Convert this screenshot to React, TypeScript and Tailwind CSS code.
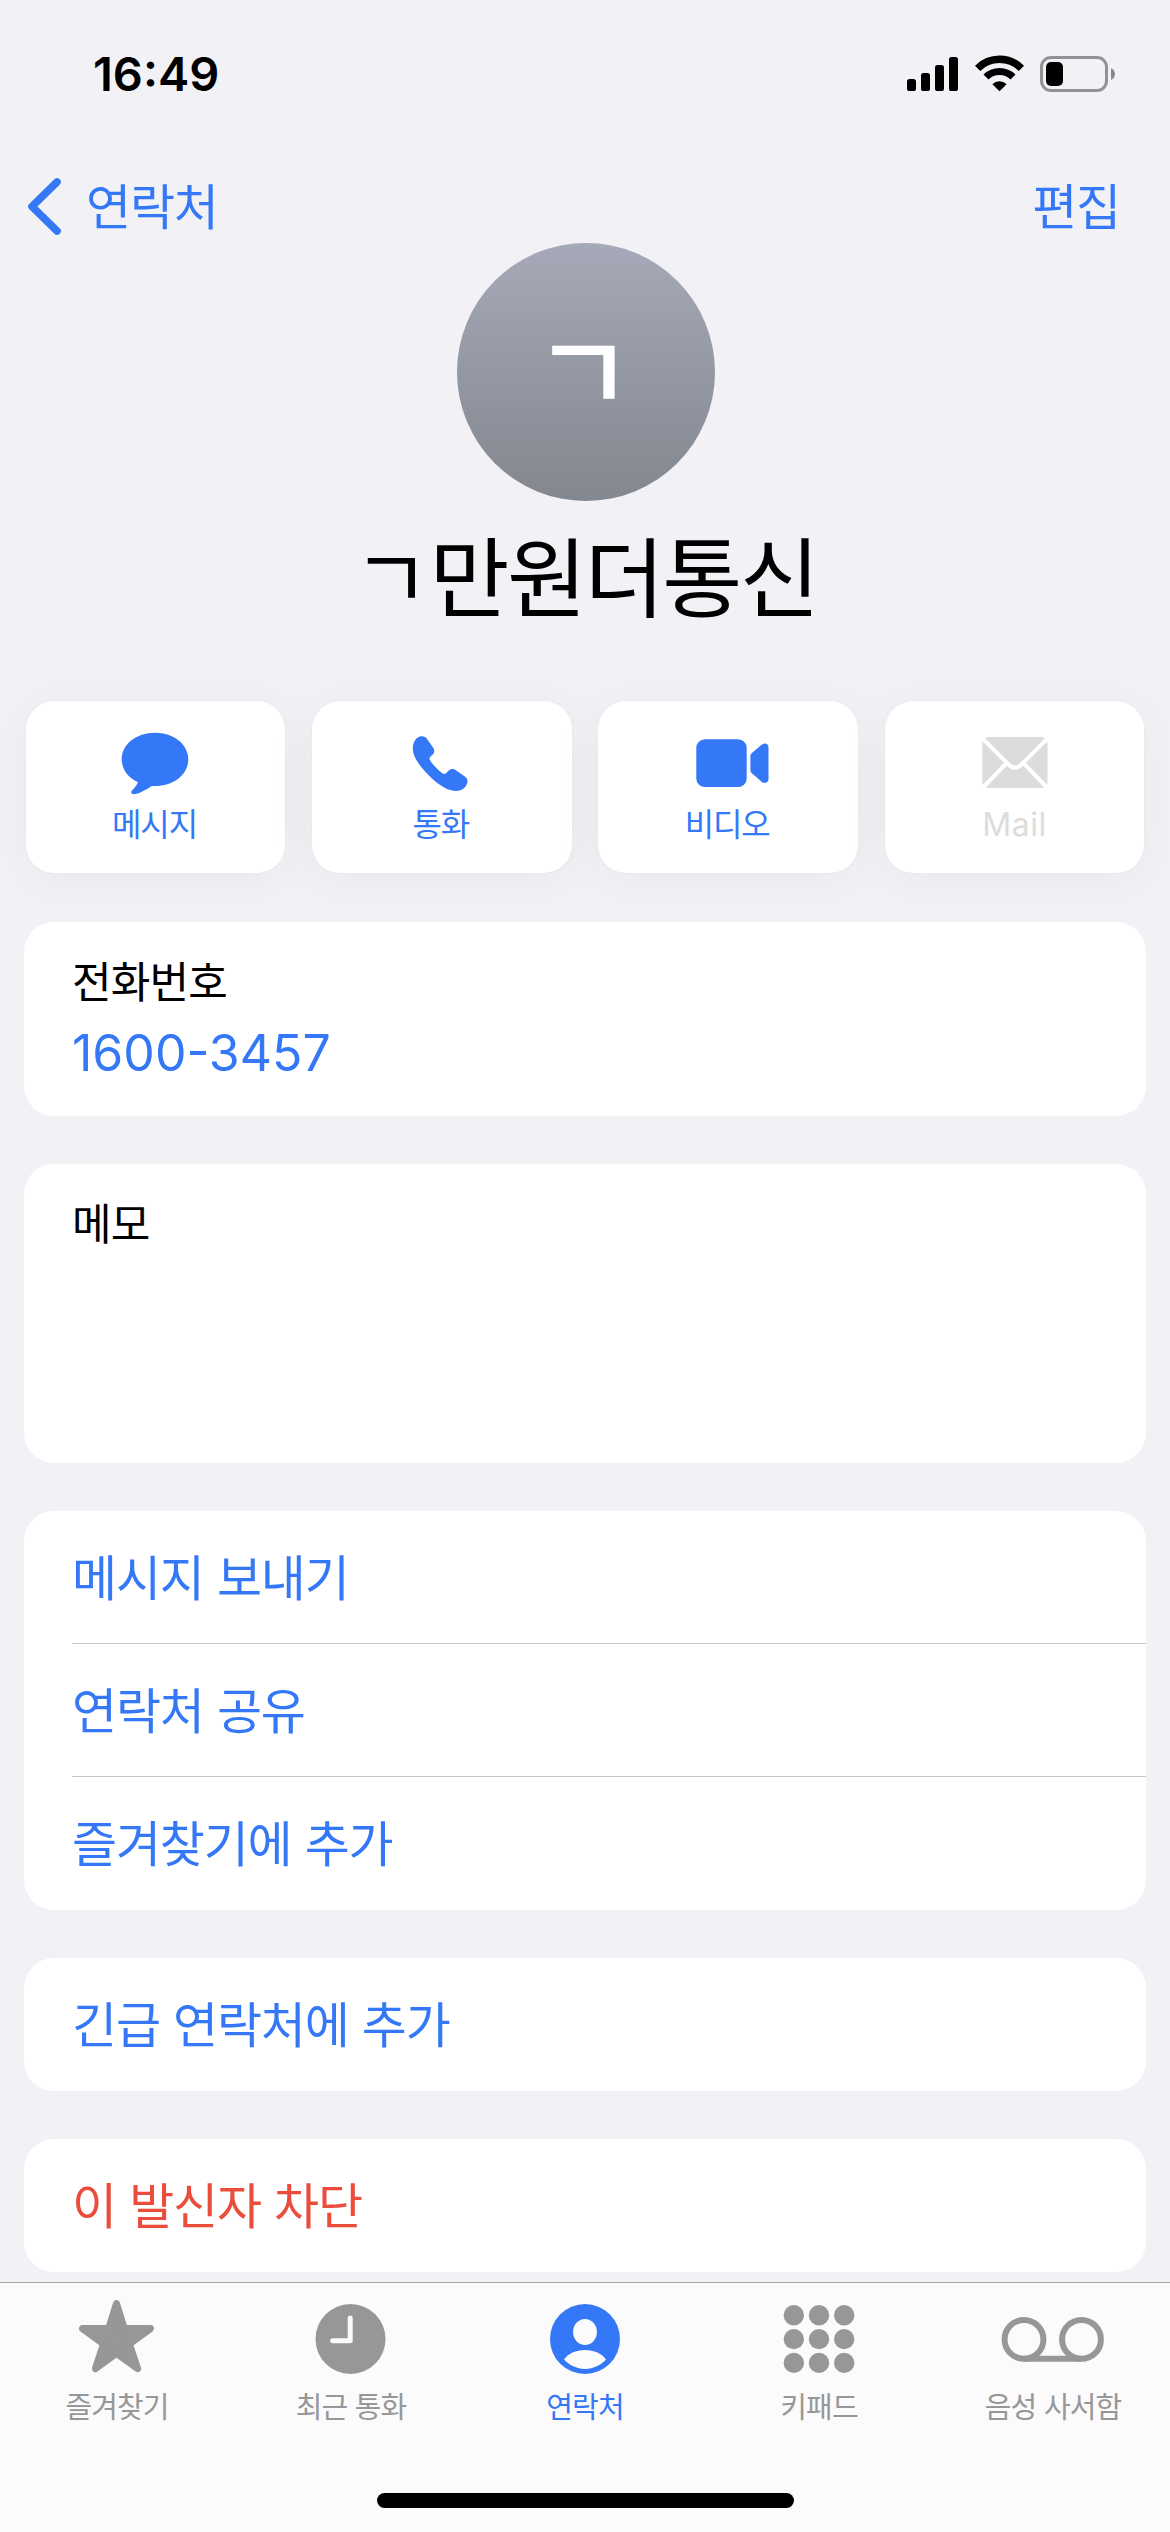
import type { ReactNode } from "react";

const KR = "font-['Noto_Sans_CJK_KR',sans-serif]";

function StatusBar() {
  return (
    <div className="flex h-[148px] items-start justify-between pl-[93px] pr-[55px] pt-[55px]">
      <span className="mt-[-10px] font-['Inter',sans-serif] text-[47px] font-semibold leading-[58px]">16:49</span>
      <div className="flex items-start">
        <svg className="h-[38px] w-[51px]" viewBox="0 0 51 38">
          <rect x="0" y="24" width="9" height="12" rx="2.6" />
          <rect x="14" y="18" width="9" height="18" rx="2.6" />
          <rect x="28" y="10" width="9" height="26" rx="2.6" />
          <rect x="42" y="2" width="9" height="34" rx="2.6" />
        </svg>
        <svg className="ml-[17px] h-[38px] w-[49px]" viewBox="0 0 49 38" fill="none">
          <path d="M2.6 13.3 A31 31 0 0 1 46.4 13.3" stroke="#000" strokeWidth="7.4" />
          <path d="M11 22 A19.3 19.3 0 0 1 38 22" stroke="#000" strokeWidth="7.2" />
          <path d="M24.5 36.3 L17.4 29.2 A10.2 10.2 0 0 1 31.6 29.2 Z" fill="#000" />
        </svg>
        <svg className="ml-[16px] h-[38px] w-[75px]" viewBox="0 0 75 38" fill="none">
          <rect x="1.5" y="2.5" width="65" height="33" rx="9.5" stroke="#929296" strokeWidth="3" />
          <rect x="6" y="7" width="17" height="24" rx="5" fill="#000" />
          <path d="M71 13.2 C76.3 15.5 76.3 22.7 71 25 Z" fill="#88888c" />
        </svg>
      </div>
    </div>
  );
}

function NavBar() {
  return (
    <header className={`${KR} flex h-[95px] items-start justify-between pl-[26px] pr-[50px] text-[49px] leading-[60px] tracking-[-1.2px] text-[#3478f7]`}>
      <button className="mt-[28px] flex items-center">
        <svg className="h-[60px] w-[37px]" viewBox="0 0 37 60" fill="none" stroke="#3478f7" strokeWidth="7.6" strokeLinecap="round" strokeLinejoin="round">
          <path d="M31 6 L6 30.5 L31 55" />
        </svg>
        <span className="-mt-[5px] ml-[23px]">연락처</span>
      </button>
      <button className="mt-[26px]">편집</button>
    </header>
  );
}

function ActionCard({ icon, label, disabled }: { icon: ReactNode; label: string; disabled?: boolean }) {
  return (
    <button
      className={`flex h-[172px] flex-1 flex-col items-center rounded-[28px] bg-white pt-[30px] shadow-[0_6px_54px_rgba(0,0,0,0.045),0_0_1px_1px_rgba(0,0,0,0.015)] ${disabled ? "text-[#dcdcdc]" : "text-[#3478f7]"}`}
    >
      <span className="flex h-[66px] items-start">{icon}</span>
      <span
        className={
          disabled
            ? "mt-[6px] font-['Inter',sans-serif] text-[32px] leading-[44px] tracking-[0.6px]"
            : `${KR} -ml-[2px] mt-[3px] text-[32px] leading-[44px] tracking-[-1.1px]`
        }
      >
        {label}
      </span>
    </button>
  );
}

const messageIcon = (
  <svg className="h-[66px] w-[68px]" viewBox="0 0 68 66" fill="currentColor">
    <path d="M34 1.7 C53 1.7 67.3 13.4 67.3 28.4 C67.3 43.4 53 55 34 55 H30.6 C25 59 16.5 63.4 12.4 63.2 C10 63 9.7 61 11.2 59.3 C13.8 56.8 16 54 16.9 51.3 C7.3 46.7 0.7 38.5 0.7 28.4 C0.7 13.4 15 1.7 34 1.7 Z" />
  </svg>
);

const phoneIcon = (
  <svg className="ml-[-3px] h-[66px] w-[56px]" viewBox="0 0 56 66" fill="currentColor">
    <path d="M0.8 17.5 C1 10.3 4.6 5.4 9.6 5.3 C12 5.2 13.8 6.1 15.2 8.2 L21.4 17 C22.8 19.2 22.4 22 20.7 23.6 L18.4 25.7 C17.2 26.8 17.2 28 18 29.3 C20.2 33 26 39.2 30.4 42.3 C31.7 43.2 33 43.2 34 42.2 L36.6 39.7 C38.7 37.8 41.5 37.6 43.8 39.2 L53.2 45.8 C55.4 47.4 56 49.5 55.2 52.2 C53.6 57 49.6 59.9 44 59.9 C36.8 59.9 28.8 55.6 20.5 48 C9.5 38 0.5 26 0.8 17.5 Z" />
  </svg>
);

const videoIcon = (
  <svg className="ml-[8px] h-[66px] w-[73px]" viewBox="0 0 73 66" fill="currentColor">
    <rect x="0.3" y="8.3" width="50.4" height="47.7" rx="8.6" />
    <path d="M54.4 25.4 C54.4 23.9 54.8 22.9 55.9 21.9 L65.3 14 C68.8 11.2 72.5 12.7 72.5 16.5 V48 C72.5 51.8 68.8 53.2 65.3 50.4 L55.9 42.3 C54.8 41.4 54.4 40.3 54.4 38.8 Z" />
  </svg>
);

const mailIcon = (
  <svg className="h-[66px] w-[66px]" viewBox="0 0 66 66" fill="none">
    <rect x="0.3" y="6" width="65.2" height="51" rx="6" fill="#dcdcdc" />
    <path d="M0 7 L26.5 33.5 C31 37.9 35 37.9 39.5 33.5 L66 7" stroke="#fff" strokeWidth="4" />
    <path d="M0 57.5 L24.6 32 M66 57.5 L41.4 32" stroke="#fff" strokeWidth="4" />
  </svg>
);

function Card({ children, className }: { children?: ReactNode; className?: string }) {
  return <section className={`${KR} mx-[24px] shrink-0 rounded-[30px] bg-white pl-[48px] ${className ?? ""}`}>{children}</section>;
}

function Row({ label, danger, divider }: { label: string; danger?: boolean; divider?: boolean }) {
  return (
    <div
      className={`flex h-[133px] items-center pb-[6px] text-[49px] leading-[70px] tracking-[-1.2px] [word-spacing:3.5px] ${danger ? "text-[#eb4d3d]" : "text-[#3478f7]"} ${divider ? "shadow-[inset_0_-1px_0_#c6c6c8]" : ""}`}
    >
      {label}
    </div>
  );
}

function Tab({ icon, label, active }: { icon: ReactNode; label: string; active?: boolean }) {
  return (
    <button className={`flex flex-1 flex-col items-center pt-[16px] ${active ? "text-[#3478f7]" : "text-[#979798]"}`}>
      <span className="block h-[80px]">{icon}</span>
      <span className={`${KR} mt-[6px] text-[29px] leading-[40px] tracking-[-0.9px] [word-spacing:2px]`}>{label}</span>
    </button>
  );
}

const starIcon = (
  <svg className="h-[80px] w-[80px]" viewBox="0 0 80 80" fill="currentColor" stroke="currentColor" strokeWidth="7" strokeLinejoin="round">
    <path d="M39.5 4.5 L47.3 29.6 H73.5 L52.5 45 L60.6 69.7 L39.5 54.5 L18.4 69.7 L26.5 45 L5.5 29.6 H31.7 Z" />
  </svg>
);

const clockIcon = (
  <svg className="h-[80px] w-[80px]" viewBox="0 0 80 80" fill="none">
    <circle cx="39.5" cy="40" r="35" fill="currentColor" />
    <path d="M39.2 19 V41.8 H21.7" stroke="#fbfbfb" strokeWidth="5" strokeLinecap="round" strokeLinejoin="round" />
  </svg>
);

const personIcon = (
  <svg className="h-[80px] w-[80px]" viewBox="0 0 80 80">
    <circle cx="40" cy="40" r="35" fill="currentColor" />
    <ellipse cx="40" cy="33" rx="11.9" ry="13" fill="#fbfbfb" />
    <path d="M19 60.6 C23 54.5 31 51 40 51 C49 51 57 54.5 61 60.6 C56 66.2 48.5 69.9 40 69.9 C31.5 69.9 24 66.2 19 60.6 Z" fill="#fbfbfb" />
  </svg>
);

const keypadIcon = (
  <svg className="h-[80px] w-[80px]" viewBox="0 0 80 80" fill="currentColor">
    {[16.3, 40.1, 63.9].map((cy) =>
      [14.8, 40, 65.2].map((cx) => <circle key={`${cx}-${cy}`} cx={cx} cy={cy} r="10.2" />),
    )}
  </svg>
);

const voicemailIcon = (
  <svg className="h-[80px] w-[106px]" viewBox="0 0 106 80" fill="none" stroke="currentColor" strokeWidth="6">
    <circle cx="24" cy="40.4" r="19.4" />
    <circle cx="81.5" cy="40.4" r="19.4" />
    <path d="M24 59.8 H81.5" />
  </svg>
);

export default function App() {
  return (
    <div className="flex h-[2532px] w-[1170px] flex-col overflow-hidden bg-[#f1f1f6] text-black">
      <main className="flex min-h-0 flex-1 flex-col overflow-hidden">
        <StatusBar />
        <NavBar />

        <div className={`${KR} flex flex-col items-center`}>
          <div className="ml-[1px] flex h-[258px] w-[258px] items-center justify-center rounded-full bg-linear-to-b from-[#a6aab8] to-[#83878f] text-white">
            <span className="-mt-[13px] mr-[4px] text-[109px] font-medium leading-[150px]">ㄱ</span>
          </div>
          <h1 className="mt-[12px] flex h-[120px] items-center text-[87px] leading-[120px] tracking-[-2.5px]">
            <span className="mr-[2px] text-[84px]">ㄱ</span>
            <span>만원더통신</span>
          </h1>
        </div>

        <div className="mt-[68px] flex gap-[26.6px] px-[25.6px]">
          <ActionCard icon={messageIcon} label="메시지" />
          <ActionCard icon={phoneIcon} label="통화" />
          <ActionCard icon={videoIcon} label="비디오" />
          <ActionCard icon={mailIcon} label="Mail" disabled />
        </div>

        <Card className="mt-[49px] h-[194px] pt-[27px]">
          <div className="text-[43px] leading-[60px] tracking-[-0.8px]">전화번호</div>
          <div className="mt-[14px] font-['Inter',sans-serif] text-[50px] leading-[60px] text-[#3478f7]">1600-3457</div>
        </Card>

        <Card className="mt-[48px] h-[299px] pt-[27px]">
          <div className="text-[43px] leading-[60px] tracking-[-0.8px]">메모</div>
        </Card>

        <Card className="mt-[48px]">
          <Row label="메시지 보내기" divider />
          <Row label="연락처 공유" divider />
          <Row label="즐겨찾기에 추가" />
        </Card>

        <Card className="mt-[48px]">
          <Row label="긴급 연락처에 추가" />
        </Card>

        <Card className="mt-[48px]">
          <Row label="이 발신자 차단" danger />
        </Card>
      </main>

      <nav className="flex h-[250px] shrink-0 flex-col items-center border-t border-[#a9a9ad] bg-[#fbfbfb]">
        <div className="flex w-full flex-1">
          <Tab icon={starIcon} label="즐겨찾기" />
          <Tab icon={clockIcon} label="최근 통화" />
          <Tab icon={personIcon} label="연락처" active />
          <Tab icon={keypadIcon} label="키패드" />
          <Tab icon={voicemailIcon} label="음성 사서함" />
        </div>
        <div className="mb-[24px] h-[15px] w-[417px] rounded-full bg-black" />
      </nav>
    </div>
  );
}
